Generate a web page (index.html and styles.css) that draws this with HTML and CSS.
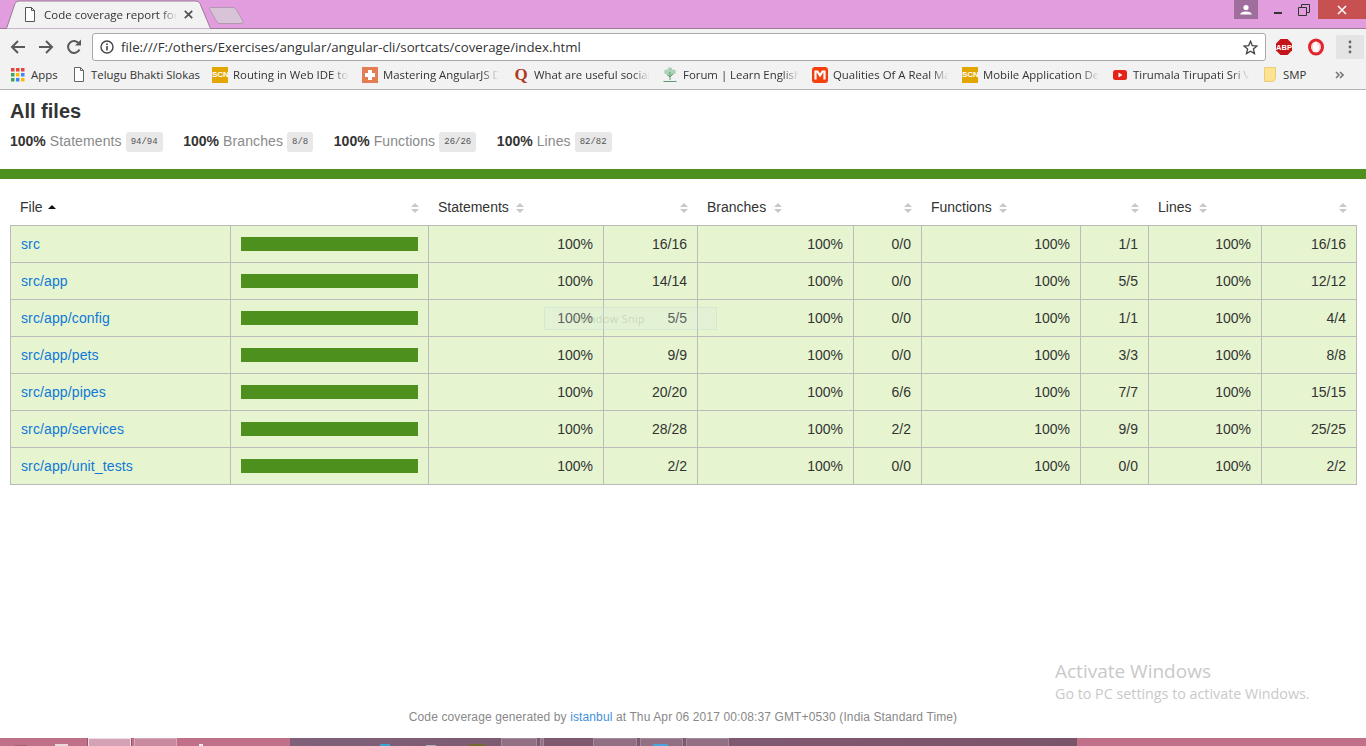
FILE: index.html
```html
<!DOCTYPE html>
<html lang="en">
<head>
<meta charset="utf-8">
<title>Code coverage report for All files</title>
<link rel="stylesheet" href="styles.css">
</head>
<body>
<div class="screen">
  <header class="chrome">
    <div class="tabstrip">
      <svg class="tabshape" width="250" height="29" viewBox="0 0 250 29">
        <path d="M0 28.500H6.500L15 3.500Q16 1 19 1H196Q199 1 200 3.500L210.500 28.500H250" fill="#f2f2f2" stroke="#9a7a98"/>
        <path d="M209.500 9Q209.500 7.500 211 7.500H233Q235 7.500 236 9L243 21Q243.500 23.500 241 23.500H220Q218 23.500 217 22Z" fill="#d8c3d7" stroke="#b596b3"/>
      </svg>
      <div class="tab">
        <svg class="ic" width="12" height="15" viewBox="0 0 12 15"><path d="M1.500.5H7.500L10.500 3.500V14.500H1.500ZM7.500.5V3.500H10.500" fill="#fff" stroke="#555"/></svg>
        <span class="tab-title">Code coverage report for</span>
        <svg class="tab-x" width="9" height="9" viewBox="0 0 9 9"><path d="M.8.8L8.200 8.200M8.200.8L.8 8.200" stroke="#555" stroke-width="1.800"/></svg>
      </div>
      <div class="winctl">
        <div class="avatar"><svg width="14" height="12" viewBox="0 0 14 12"><circle cx="7" cy="3.500" r="2.600" fill="#fff"/><path d="M1 10.500Q2 7.500 7 7.500T13 10.500Z" fill="#fff"/></svg></div>
        <div class="wbtn"><svg width="10" height="10" viewBox="0 0 10 10"><rect x="1" y="7" width="8" height="2" fill="#333"/></svg></div>
        <div class="wbtn"><svg width="12" height="12" viewBox="0 0 12 12"><path d="M.500 3.500H8.500V11.500H.500ZM3.500 3V.500H11.500V8.500H9" fill="none" stroke="#333"/></svg></div>
        <div class="wclose"><svg width="10" height="10" viewBox="0 0 10 10"><path d="M1 1L9 9M9 1L1 9" stroke="#fff" stroke-width="1.500"/></svg></div>
      </div>
    </div>
    <div class="toolbar">
      <svg class="nav" width="16" height="16" viewBox="0 0 16 16"><path d="M15 8H2M8 2L2 8L8 14" fill="none" stroke="#5a5a5a" stroke-width="2"/></svg>
      <svg class="nav" width="16" height="16" viewBox="0 0 16 16"><path d="M1 8H14M8 2L14 8L8 14" fill="none" stroke="#5a5a5a" stroke-width="2"/></svg>
      <svg class="nav" width="16" height="16" viewBox="0 0 16 16"><path d="M13.500 10.500A6 6 0 1 1 13 4.500" fill="none" stroke="#5a5a5a" stroke-width="2"/><path d="M9 6.500H15V.5Z" fill="#5a5a5a"/></svg>
      <div class="omnibox">
        <svg width="14" height="14" viewBox="0 0 14 14"><circle cx="7" cy="7" r="6" fill="none" stroke="#444" stroke-width="1.400"/><rect x="6.200" y="6" width="1.600" height="4.500" fill="#444"/><rect x="6.200" y="3.400" width="1.600" height="1.600" fill="#444"/></svg>
        <span class="url">file:///F:/others/Exercises/angular/angular-cli/sortcats/coverage/index.html</span>
        <svg class="star" width="15" height="15" viewBox="0 0 15 15"><path d="M7.500 1.300L9.300 5.600L14 6L10.400 9L11.500 13.600L7.500 11.200L3.500 13.600L4.600 9L1 6L5.700 5.600Z" fill="none" stroke="#444" stroke-width="1.300"/></svg>
      </div>
      <div class="ext">
        <svg width="18" height="18" viewBox="0 0 18 18"><path d="M5.500 1H12.500L17 5.500V12.500L12.500 17H5.500L1 12.500V5.500Z" fill="#c4141a"/><text x="9" y="11.800" class="abp">ABP</text></svg>
        <svg width="18" height="18" viewBox="0 0 18 18"><ellipse cx="9" cy="9" rx="6.500" ry="7" fill="#f7d7d8" stroke="#e0262c" stroke-width="3"/><path d="M6 14V7Q6.300 5.800 6.800 7V5Q7.300 3.800 7.800 5V4Q8.500 2.800 9.200 4V5Q9.800 3.800 10.400 5V8.500L11.500 7.500Q12.300 7.500 12 9L10.500 14Z" fill="#fff"/></svg>
        <div class="menu"><svg width="4" height="14" viewBox="0 0 4 14"><circle cx="2" cy="2" r="1.400" fill="#666"/><circle cx="2" cy="7" r="1.400" fill="#666"/><circle cx="2" cy="12" r="1.400" fill="#666"/></svg></div>
      </div>
    </div>
    <div class="bookmarks">
      <div class="bm bm-apps">
        <svg width="14" height="14" viewBox="0 0 14 14" class="ic-apps"><g><rect width="3.500" height="3.500" fill="#e8453c"/><rect x="5" width="3.500" height="3.500" fill="#e8453c"/><rect x="10" width="3.500" height="3.500" fill="#e8453c"/><rect y="5" width="3.500" height="3.500" fill="#3aa757"/><rect x="5" y="5" width="3.500" height="3.500" fill="#fbbc05"/><rect x="10" y="5" width="3.500" height="3.500" fill="#4285f4"/><rect y="10" width="3.500" height="3.500" fill="#3aa757"/><rect x="5" y="10" width="3.500" height="3.500" fill="#4285f4"/><rect x="10" y="10" width="3.500" height="3.500" fill="#fbbc05"/></g></svg>
        <span>Apps</span>
      </div>
      <div class="bm bm-a">
        <svg class="ic" width="12" height="15" viewBox="0 0 12 15"><path d="M1.500.5H7.500L10.500 3.500V14.500H1.500ZM7.500.5V3.500H10.500" fill="#fff" stroke="#666"/></svg>
        <span>Telugu Bhakti Slokas</span>
      </div>
      <div class="bm bm-b"><span class="scn">SCN</span><span class="fade">Routing in Web IDE to</span></div>
      <div class="bm bm-c">
        <svg class="ic" width="16" height="16" viewBox="0 0 16 16"><rect width="16" height="16" fill="#e27d56"/><path d="M6 3H10V6H13V10H10V13H6V10H3V6H6Z" fill="#fff"/></svg>
        <span class="fade">Mastering AngularJS D</span>
      </div>
      <div class="bm bm-d"><span class="quora">Q</span><span class="fade">What are useful social</span></div>
      <div class="bm bm-e">
        <svg class="ic" width="16" height="16" viewBox="0 0 16 16"><g fill="#a9d2b6"><circle cx="8" cy="2.500" r="2.200"/><circle cx="4.500" cy="5" r="2.400"/><circle cx="11.500" cy="5" r="2.400"/><circle cx="8" cy="6.500" r="2.500"/></g><path d="M8 5V13M1.500 14.500H14.500M5 7.500L8 10L11 7" stroke="#5f9a75" fill="none"/></svg>
        <span class="fade">Forum | Learn English</span>
      </div>
      <div class="bm bm-f">
        <svg class="ic" width="16" height="16" viewBox="0 0 16 16"><rect width="16" height="16" rx="3" fill="#f5400e"/><path d="M3.500 12.500V4.500H5.500L8 8.500L10.500 4.500H12.500V12.500" fill="none" stroke="#fff" stroke-width="2.200"/></svg>
        <span class="fade">Qualities Of A Real Ma</span>
      </div>
      <div class="bm bm-g"><span class="scn">SCN</span><span class="fade">Mobile Application De</span></div>
      <div class="bm bm-h">
        <svg class="ic-yt" width="14" height="10" viewBox="0 0 14 10"><rect width="14" height="10" rx="2.500" fill="#e62117"/><path d="M5.500 2.500L9.500 5L5.500 7.500Z" fill="#fff"/></svg>
        <span class="fade">Tirumala Tirupati Sri V</span>
      </div>
      <div class="bm bm-i">
        <svg class="ic-folder" width="12" height="15" viewBox="0 0 12 15"><path d="M.500.5H11.500V11.500L9.500 14.500H.500Z" fill="#fde28f" stroke="#e8cd7a"/></svg>
        <span>SMP</span>
      </div>
      <svg class="more" width="9" height="8" viewBox="0 0 9 8"><path d="M1 1L4 4L1 7M5 1L8 4L5 7" fill="none" stroke="#777" stroke-width="1.600"/></svg>
    </div>
  </header>

  <main class="content">
    <div class="pad">
      <h1>All files</h1>
      <div class="summary">
        <div class="stat"><strong>100%</strong> <span class="quiet">Statements</span> <span class="frac">94/94</span></div>
        <div class="stat"><strong>100%</strong> <span class="quiet">Branches</span> <span class="frac">8/8</span></div>
        <div class="stat"><strong>100%</strong> <span class="quiet">Functions</span> <span class="frac">26/26</span></div>
        <div class="stat"><strong>100%</strong> <span class="quiet">Lines</span> <span class="frac">82/82</span></div>
      </div>
    </div>
    <div class="status-line"></div>
    <div class="tablewrap">
      <table class="coverage">
        <colgroup>
          <col class="c1"><col class="c2"><col class="c3"><col class="c4"><col class="c5"><col class="c6"><col class="c7"><col class="c8"><col class="c9"><col class="c10">
        </colgroup>
        <thead>
          <tr>
            <th class="left">File <i class="up"></i></th>
            <th class="sorter"><i class="sort"></i></th>
            <th class="left">Statements <i class="sort inline"></i></th>
            <th class="sorter"><i class="sort"></i></th>
            <th class="left">Branches <i class="sort inline"></i></th>
            <th class="sorter"><i class="sort"></i></th>
            <th class="left">Functions <i class="sort inline"></i></th>
            <th class="sorter"><i class="sort"></i></th>
            <th class="left">Lines <i class="sort inline"></i></th>
            <th class="sorter"><i class="sort"></i></th>
          </tr>
        </thead>
        <tbody>
          <tr><td class="file"><a href="#">src</a></td><td class="pic"><div class="bar"></div></td><td>100%</td><td>16/16</td><td>100%</td><td>0/0</td><td>100%</td><td>1/1</td><td>100%</td><td>16/16</td></tr>
          <tr><td class="file"><a href="#">src/app</a></td><td class="pic"><div class="bar"></div></td><td>100%</td><td>14/14</td><td>100%</td><td>0/0</td><td>100%</td><td>5/5</td><td>100%</td><td>12/12</td></tr>
          <tr><td class="file"><a href="#">src/app/config</a></td><td class="pic"><div class="bar"></div></td><td>100%</td><td>5/5</td><td>100%</td><td>0/0</td><td>100%</td><td>1/1</td><td>100%</td><td>4/4</td></tr>
          <tr><td class="file"><a href="#">src/app/pets</a></td><td class="pic"><div class="bar"></div></td><td>100%</td><td>9/9</td><td>100%</td><td>0/0</td><td>100%</td><td>3/3</td><td>100%</td><td>8/8</td></tr>
          <tr><td class="file"><a href="#">src/app/pipes</a></td><td class="pic"><div class="bar"></div></td><td>100%</td><td>20/20</td><td>100%</td><td>6/6</td><td>100%</td><td>7/7</td><td>100%</td><td>15/15</td></tr>
          <tr><td class="file"><a href="#">src/app/services</a></td><td class="pic"><div class="bar"></div></td><td>100%</td><td>28/28</td><td>100%</td><td>2/2</td><td>100%</td><td>9/9</td><td>100%</td><td>25/25</td></tr>
          <tr><td class="file"><a href="#">src/app/unit_tests</a></td><td class="pic"><div class="bar"></div></td><td>100%</td><td>2/2</td><td>100%</td><td>0/0</td><td>100%</td><td>0/0</td><td>100%</td><td>2/2</td></tr>
        </tbody>
      </table>
    </div>
    <footer class="footer">Code coverage generated by <a href="#">istanbul</a> at Thu Apr 06 2017 00:08:37 GMT+0530 (India Standard Time)</footer>
    <div class="snip">Window Snip</div>
    <div class="activate">
      <div class="act-title">Activate Windows</div>
      <div class="act-sub">Go to PC settings to activate Windows.</div>
    </div>
  </main>

  <div class="taskbar">
    <div class="tb-left"><span class="tb-btn on"></span><span class="tb-btn"></span></div>
    <div class="tb-mid"><span class="tb-btn dim first"></span><span class="tb-btn dim sliver"></span><span class="tb-btn dim gapped"></span><span class="tb-btn dim"></span><span class="tb-btn dim"></span></div>
    <div class="tb-right"></div>
    <span class="tip t-gray"></span>
    <span class="tip t-white"></span>
    <span class="tip t-white2"></span>
    <span class="tip t-blue"></span>
    <span class="tip t-silver"></span>
    <span class="tip t-olive"></span>
    <span class="tip t-blue2"></span>
  </div>
</div>
</body>
</html>
```

FILE: styles.css
```css
* { box-sizing: border-box; }
html, body { margin: 0; padding: 0; height: 100%; overflow: hidden; }
body { font-family: "Liberation Sans", Arial, sans-serif; background: #fff; }
.screen { width: 1366px; height: 746px; display: flex; flex-direction: column; }

.chrome { flex: none; height: 90px; display: flex; flex-direction: column; background: #f2f2f2; border-bottom: 1px solid #b4b4b4; }
.tabstrip { position: relative; height: 29px; flex: none; background: #e19ddd; border-bottom: 1px solid #9a7a98; display: flex; }
.tabshape { position: absolute; left: 0; top: 0; }
.tab { position: relative; display: flex; align-items: center; height: 28px; padding-left: 24px; }
.tab-title { font: 11.5px "Open Sans", sans-serif; color: #333; width: 133px; margin-left: 3px; overflow: hidden; white-space: nowrap; -webkit-mask-image: linear-gradient(90deg, #000 88%, transparent); mask-image: linear-gradient(90deg, #000 88%, transparent); }
.tab-x { margin-left: 7px; }
.winctl { position: relative; margin-left: auto; display: flex; align-items: flex-start; height: 19px; }
.avatar { width: 24px; height: 19px; background: #a06e9d; display: flex; align-items: center; justify-content: center; margin-right: 7px; }
.wbtn { width: 26px; height: 19px; display: flex; align-items: center; justify-content: center; }
.wbtn + .wbtn { margin-right: 1px; }
.wclose { width: 48px; height: 19px; background: #c75050; display: flex; align-items: center; justify-content: center; }

.toolbar { height: 33px; flex: none; display: flex; align-items: center; padding: 3px 0 0 10px; }
.nav { margin-right: 12px; flex: none; }
.omnibox { width: 1174px; height: 28px; margin-left: -2px; background: #fff; border: 1px solid #a9a9a9; border-radius: 3px; display: flex; align-items: center; padding: 0 7px; }
.url { font: 13.25px "Open Sans", sans-serif; color: #333; margin-left: 7px; flex: 1; white-space: nowrap; }
.star { flex: none; }
.ext { display: flex; align-items: center; margin-left: 9px; gap: 14px; }
.abp { font: bold 7.5px "Liberation Sans", sans-serif; fill: #fff; text-anchor: middle; }
.menu { width: 28px; height: 24px; margin-left: -3px; background: #e4e4e4; border-radius: 2px; display: flex; align-items: center; justify-content: center; }

.bookmarks { position: relative; height: 27px; flex: none; display: flex; align-items: center; padding: 0 0 2px 11px; font: 11.4px "Open Sans", sans-serif; color: #333; white-space: nowrap; }
.bm { display: flex; align-items: center; flex: none; }
.fade { flex: none; width: 116px; overflow: hidden; -webkit-mask-image: linear-gradient(90deg, #000 85%, transparent); mask-image: linear-gradient(90deg, #000 85%, transparent); }
.ic { flex: none; margin-right: 5px; }
.ic-apps { flex: none; margin-right: 6px; }
.ic-yt { flex: none; margin-right: 6px; }
.ic-folder { flex: none; margin-right: 7px; }
.bm-a .ic { margin-right: 6px; }
.scn { flex: none; width: 16px; height: 16px; margin-right: 5px; background: #e3a500; color: #fff; font: bold 8px/16px "Liberation Sans", sans-serif; text-align: center; overflow: hidden; }
.quora { flex: none; width: 16px; margin-right: 5px; color: #b03a22; font: bold 17px/16px "Liberation Serif", serif; text-align: center; }
.bm-apps { width: 62px; }
.bm-a { width: 139px; }
.bm-b { width: 150px; }
.bm-c { width: 151px; }
.bm-d { width: 149px; }
.bm-e { width: 150px; }
.bm-f { width: 150px; }
.bm-g { width: 151px; }
.bm-h { width: 151px; }
.bm-i { width: 71px; }
.more { flex: none; }

.content { position: relative; flex: 1; min-height: 0; display: flex; flex-direction: column; color: #333; font-size: 14px; }
.pad { padding: 10px 10px 0; height: 79px; flex: none; }
h1 { margin: 0 0 9px; font-size: 20px; line-height: 23px; font-weight: bold; }
.summary { display: flex; gap: 20.6px; }
.stat { display: flex; align-items: flex-start; line-height: 18px; white-space: nowrap; }
.stat strong { margin-right: 4px; }
.quiet { color: #8a8a8a; margin-right: 4px; letter-spacing: .1px; }
.frac { font: 9px/20px "Liberation Mono", monospace; background: #e8e8e8; border-radius: 3px; padding: 0 5px; height: 20px; color: #555; }
.status-line { height: 10px; flex: none; background: #4d901e; }

.tablewrap { padding: 10px 10px 0; flex: none; }
.coverage { table-layout: fixed; width: 1346px; border-collapse: collapse; font-size: 14px; }
.c1 { width: 220px; } .c2 { width: 198px; } .c3 { width: 175px; } .c4 { width: 94px; } .c5 { width: 156px; }
.c6 { width: 68px; } .c7 { width: 159px; } .c8 { width: 68px; } .c9 { width: 113px; } .c10 { width: 95px; }
.coverage th { height: 36px; padding: 0 10px 0 9.5px; font-weight: normal; text-align: left; white-space: nowrap; border: 0; }
.coverage th.sorter { text-align: right; padding-right: 10px; }
.coverage td { height: 37px; padding: 0 10px; text-align: right; background: #e6f5d0; border: 1px solid #bbb; white-space: nowrap; }
.coverage td.file { text-align: left; }
.coverage a { color: #0f78d8; text-decoration: none; letter-spacing: .12px; }
.footer a { color: #3f8fdc; text-decoration: none; }
.coverage td.pic { padding: 0 10px; }
.bar { height: 14px; background: #4d901e; }
.sort, .up { display: inline-block; position: relative; width: 8px; height: 10px; vertical-align: -1px; }
.sort::before, .sort::after { content: ""; position: absolute; left: 0; border-left: 4px solid transparent; border-right: 4px solid transparent; }
.sort::before { top: 0; border-bottom: 4px solid #c8c8c8; }
.sort::after { bottom: 0; border-top: 4px solid #c8c8c8; }
.sort.inline { margin-left: 3.5px; }
.up::before { content: ""; position: absolute; left: 0; top: 2px; border-left: 4px solid transparent; border-right: 4px solid transparent; border-bottom: 4px solid #111; }
.up { margin-left: 2px; }

.footer { margin-top: auto; height: 29px; text-align: center; font-size: 12px; line-height: 17px; color: #888; letter-spacing: .12px; }
.snip { position: absolute; left: 544px; top: 217px; width: 173px; height: 23px; background: rgba(220,235,225,.25); border: 1px solid rgba(190,215,205,.4); font: 11.5px/21px "Open Sans", sans-serif; color: rgba(120,130,110,.25); padding-left: 30px; }
.activate { position: absolute; left: 1055px; top: 569px; font-family: "Open Sans", sans-serif; color: #c9c9c9; }
.act-title { font-size: 19px; line-height: 24px; }
.act-sub { font-size: 14.3px; line-height: 20px; margin-top: 1px; }

.taskbar { position: relative; flex: none; height: 8px; display: flex; background: #c1708a; overflow: hidden; }
.tb-left { width: 290px; display: flex; padding-left: 88px; gap: 3px; }
.tb-mid { width: 787px; background: linear-gradient(90deg, #80607a, #7d5a70 30%, #7f5870 70%, #7a5468); display: flex; padding-left: 211px; gap: 3px; }
.tb-right { flex: 1; background: #c1708a; }
.tb-btn { width: 43px; height: 8px; background: #c98a9f; border: 1px solid #d9a9b9; border-bottom: 0; }
.tb-btn.on { background: #d3a3b5; border-color: #f0dde3; box-shadow: 0 0 0 1px #94566c; }
.tb-btn.dim { background: #927083; border-color: #a48a99; }
.tb-btn.first { width: 36px; }
.tb-btn.sliver { width: 4px; }
.tb-btn.gapped { margin-left: 46px; width: 44px; }
.tip { position: absolute; bottom: 0; height: 1px; }
.t-gray { left: 15px; width: 12px; background: #a5636f; }
.t-white { left: 55px; width: 13px; height: 2px; background: #e6dbd9; }
.t-white2 { left: 199px; width: 4px; height: 2px; background: #f3e9ec; }
.t-blue { left: 380px; width: 10px; height: 2px; background: #3aa6d0; }
.t-silver { left: 426px; width: 10px; background: #b0b0b0; }
.t-olive { left: 469px; width: 16px; height: 2px; background: #6f6a30; }
.t-blue2 { left: 653px; width: 15px; height: 2px; background: #4aa3dc; }
```
